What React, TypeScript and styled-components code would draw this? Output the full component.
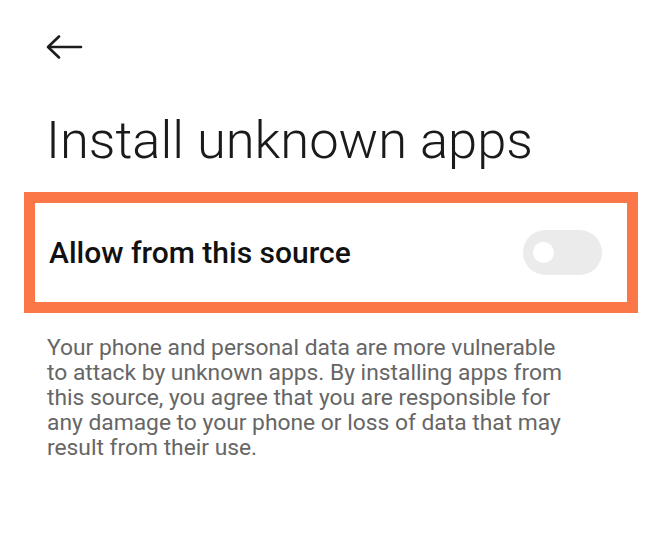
import React from "react";
import styled, { createGlobalStyle } from "styled-components";

const Global = createGlobalStyle`
  html, body { margin: 0; padding: 0; background: #ffffff; }
  body { font-family: Roboto, "Noto Sans", sans-serif; width: 650px; height: 534px; overflow: hidden; }
`;

const Screen = styled.div`
  width: 650px;
  height: 534px;
  box-sizing: border-box;
  display: flex;
  flex-direction: column;
`;

const BackButton = styled.button`
  margin: 33px 0 0 45px;
  width: 40px;
  height: 28px;
  padding: 0;
  border: none;
  background: transparent;
  display: flex;
  align-items: center;
`;

const Title = styled.h1`
  margin: 49px 0 0 46px;
  font-family: Roboto, sans-serif;
  font-weight: 300;
  font-size: 52.5px;
  line-height: 60px;
  color: #1a1a1a;
  letter-spacing: 0;
`;

const Highlight = styled.div`
  margin: 22px 0 0 24px;
  width: 614px;
  height: 121px;
  box-sizing: border-box;
  border: 11px solid #fb7748;
  display: flex;
  align-items: center;
  justify-content: space-between;
  padding: 0 25px 0 14px;
`;

const RowLabel = styled.span`
  font-family: Roboto, sans-serif;
  font-weight: 500;
  font-size: 30px;
  color: #111111;
`;

const Track = styled.div<{ $on: boolean }>`
  width: 79px;
  height: 45px;
  border-radius: 23px;
  background: ${(p) => (p.$on ? "#0d84ff" : "#ebebeb")};
  display: flex;
  align-items: center;
  padding: 0 10px;
  box-sizing: border-box;
  justify-content: ${(p) => (p.$on ? "flex-end" : "flex-start")};
`;

const Knob = styled.div`
  width: 21px;
  height: 21px;
  border-radius: 50%;
  background: #ffffff;
`;

const Description = styled.p`
  margin: 22px 0 0 47px;
  width: 522px;
  font-family: Roboto, sans-serif;
  font-weight: 400;
  font-size: 22.8px;
  line-height: 25px;
  color: #666666;
`;

export default function App() {
  return (
    <>
      <Global />
      <Screen>
        <BackButton aria-label="Back">
          <svg width="38" height="26" viewBox="0 0 38 26" fill="none">
            <path d="M36 13H4" stroke="#1c1c1c" strokeWidth="2.6" strokeLinecap="round" />
            <path d="M14 2.5L3 13l11 10.5" stroke="#1c1c1c" strokeWidth="2.6" strokeLinecap="round" strokeLinejoin="round" />
          </svg>
        </BackButton>
        <Title>Install unknown apps</Title>
        <Highlight>
          <RowLabel>Allow from this source</RowLabel>
          <Track $on={false}>
            <Knob />
          </Track>
        </Highlight>
        <Description>
          Your phone and personal data are more vulnerable to attack by unknown apps. By installing apps from this source, you agree that you are responsible for any damage to your phone or loss of data that may result from their use.
        </Description>
      </Screen>
    </>
  );
}
